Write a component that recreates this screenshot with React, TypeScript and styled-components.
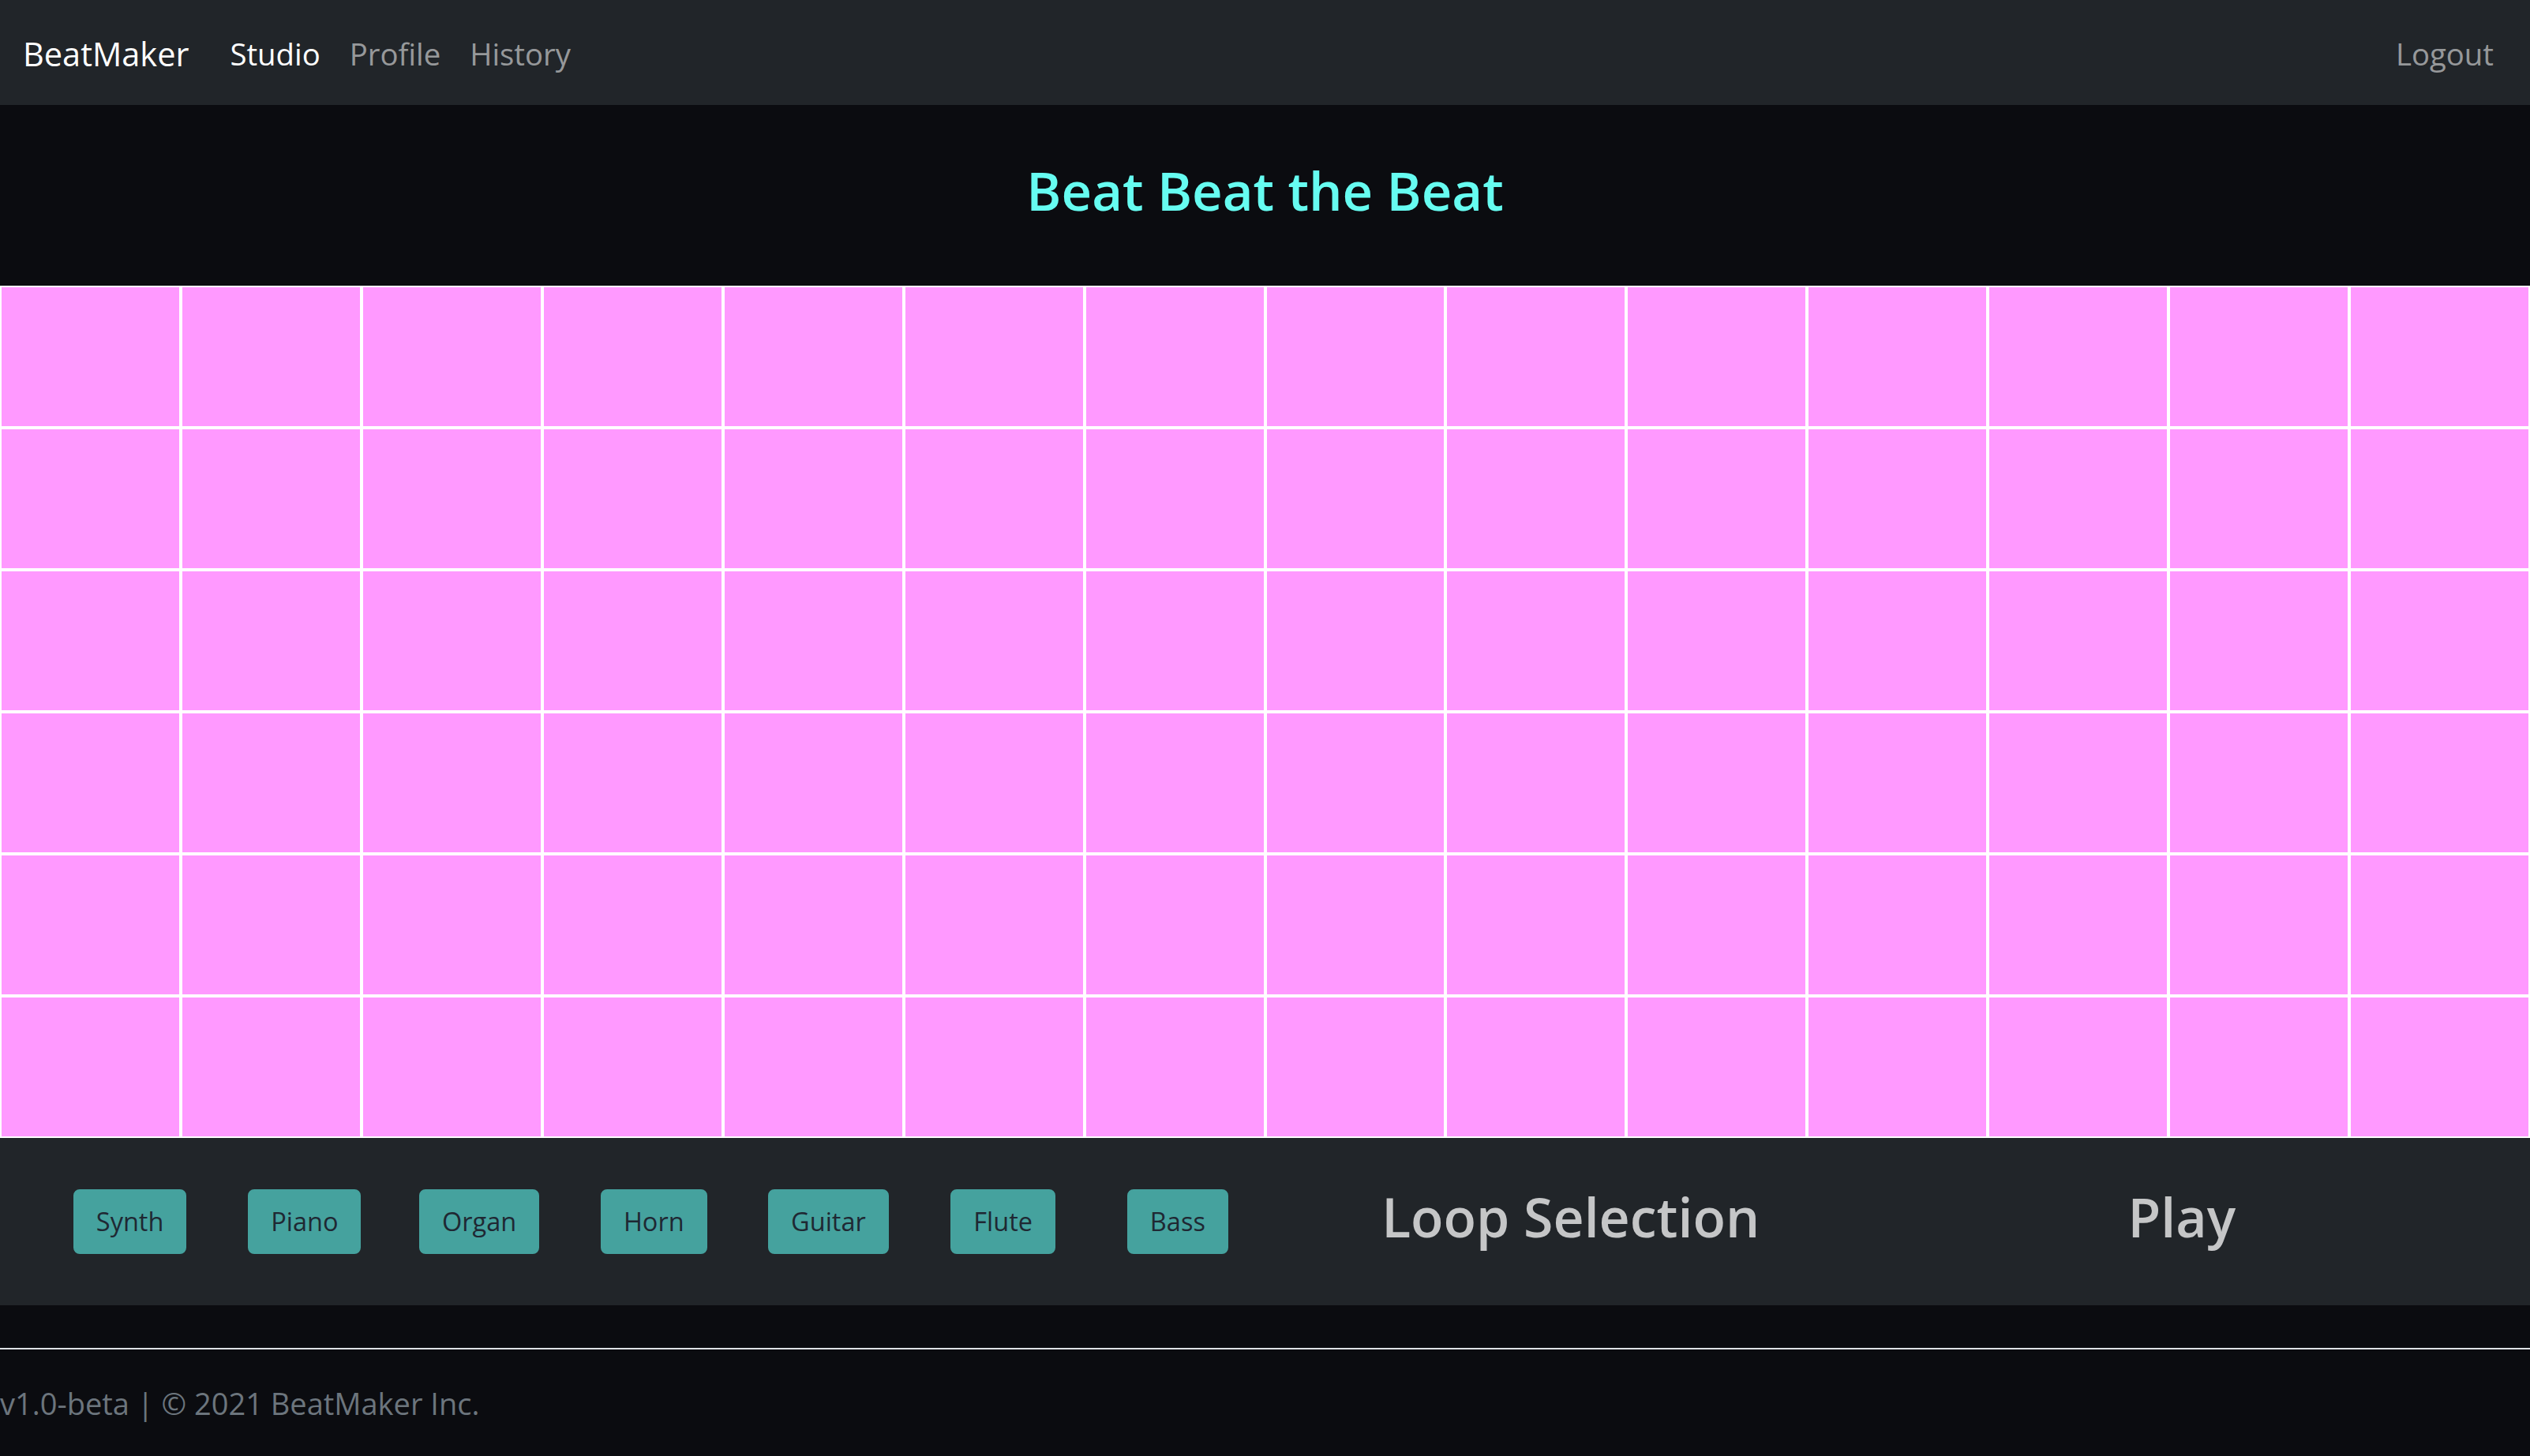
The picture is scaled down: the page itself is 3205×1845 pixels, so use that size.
import React from "react";
import styled, { createGlobalStyle } from "styled-components";

const GlobalStyle = createGlobalStyle`
  html, body {
    margin: 0;
    padding: 0;
    background: #0b0c10;
  }
  body {
    font-family: "Open Sans", "Noto Sans", "Liberation Sans", sans-serif;
    min-height: 100vh;
    overflow: hidden;
  }
  * { box-sizing: border-box; }
`;

const Page = styled.div`
  display: flex;
  flex-direction: column;
  min-height: 100vh;
  background: #0b0c10;
`;

const Navbar = styled.nav`
  display: flex;
  align-items: center;
  height: 133px;
  padding: 4px 46px 0 29px;
  background: #212529;
`;

const Brand = styled.a`
  font-size: 41.5px;
  color: #ffffff;
  margin-right: 52px;
  white-space: nowrap;
  line-height: 1.5;
`;

const NavList = styled.div`
  display: flex;
  align-items: center;
  gap: 37px;
`;

const NavLink = styled.a<{ $active?: boolean }>`
  font-size: 38.3px;
  line-height: 1.5;
  color: ${(p) => (p.$active ? "#ffffff" : "rgba(255, 255, 255, 0.55)")};
  white-space: nowrap;
`;

const NavEnd = styled.div`
  margin-left: auto;
`;

const Header = styled.header`
  height: 229px;
  padding-bottom: 12px;
  display: flex;
  align-items: center;
  justify-content: center;
`;

const Title = styled.h1`
  margin: 0;
  font-size: 67px;
  font-weight: 600;
  color: #66fcf1;
  line-height: 1.2;
`;

const BeatGrid = styled.div`
  display: grid;
  grid-template-columns: repeat(14, 1fr);
  grid-auto-rows: 180px;
`;

const Cell = styled.div<{ $on?: boolean }>`
  background: ${(p) => (p.$on ? "#66fcf1" : "#ff99ff")};
  border: 2px solid #ffffff;
`;

const ControlBar = styled.section`
  display: grid;
  grid-template-columns: 2fr 1fr 1fr;
  align-items: center;
  height: 212px;
  padding: 0 54px;
  background: #212529;
`;

const InstrumentRow = styled.div`
  display: grid;
  grid-template-columns: repeat(7, 1fr);
  justify-items: center;
  align-items: center;
`;

const InstrumentButton = styled.button`
  font-family: inherit;
  font-size: 32.5px;
  line-height: 1.5;
  padding: 14.5px 27px;
  color: #1f2833;
  background: #45a29e;
  border: 2px solid #45a29e;
  border-radius: 8px;
  cursor: pointer;
`;

const ControlLabel = styled.h2`
  margin: 0 0 12px;
  text-align: center;
  font-size: 68px;
  font-weight: 600;
  line-height: 1.2;
  color: #c5c6c7;
  white-space: nowrap;
`;

const Divider = styled.hr`
  margin: 54px 0 0;
  border: 0;
  height: 2px;
  background: #dee2e6;
`;

const Footer = styled.footer`
  height: 135px;
  display: flex;
  align-items: center;
  font-size: 38px;
  color: #6c757d;
  white-space: nowrap;
`;

const instruments = ["Synth", "Piano", "Organ", "Horn", "Guitar", "Flute", "Bass"];
const ROWS = 6;
const COLS = 14;

export default function App() {
  return (
    <>
      <GlobalStyle />
      <Page>
        <Navbar>
          <Brand>BeatMaker</Brand>
          <NavList>
            <NavLink $active>Studio</NavLink>
            <NavLink>Profile</NavLink>
            <NavLink>History</NavLink>
          </NavList>
          <NavEnd>
            <NavLink>Logout</NavLink>
          </NavEnd>
        </Navbar>
        <Header>
          <Title>Beat Beat the Beat</Title>
        </Header>
        <BeatGrid>
          {Array.from({ length: ROWS * COLS }).map((_, i) => (
            <Cell key={i} />
          ))}
        </BeatGrid>
        <ControlBar>
          <InstrumentRow>
            {instruments.map((name) => (
              <InstrumentButton key={name}>{name}</InstrumentButton>
            ))}
          </InstrumentRow>
          <ControlLabel>Loop Selection</ControlLabel>
          <ControlLabel>Play</ControlLabel>
        </ControlBar>
        <Divider />
        <Footer>v1.0-beta | © 2021 BeatMaker Inc.</Footer>
      </Page>
    </>
  );
}
